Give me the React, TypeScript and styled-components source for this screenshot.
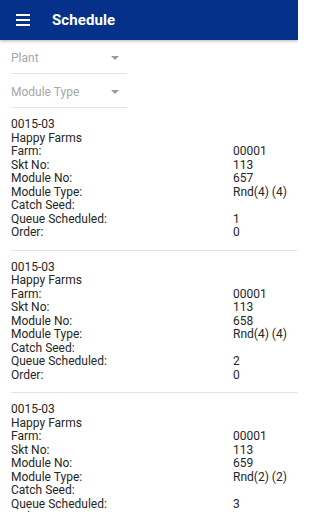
import React from "react";
import styled, { createGlobalStyle } from "styled-components";

//STYLES
const GlobalStyle = createGlobalStyle`
  html, body {
    margin: 0;
    padding: 0;
    background: #ffffff;
    font-family: Roboto, "Liberation Sans", sans-serif;
  }
`;

const Page = styled.div`
  width: 298px;
  height: 512px;
  overflow: hidden;
  background: #ffffff;
`;

const Toolbar = styled.header`
  height: 40px;
  background: #05318a;
  display: flex;
  align-items: center;
  padding-left: 16px;
  box-shadow: 0 1px 3px rgba(0, 0, 0, 0.3);
  position: relative;
  z-index: 1;
`;

const MenuButton = styled.div`
  width: 14px;
  display: flex;
  flex-direction: column;
  gap: 3px;
  margin-right: 22px;

  span {
    display: block;
    height: 2px;
    background: #ffffff;
  }
`;

const Title = styled.h1`
  margin: 0;
  color: #ffffff;
  font-size: 15px;
  font-weight: bold;
  letter-spacing: 0.1px;
`;

const Filters = styled.div`
  padding: 0 0 0 11px;
`;

const Select = styled.div`
  width: 116px;
  height: 34px;
  display: flex;
  align-items: center;
  justify-content: space-between;
  border-bottom: 1px solid #e4e4e4;
  color: #a6a6a6;
  font-size: 12px;
  box-sizing: border-box;
  padding-top: 2px;
`;

const Caret = styled.span`
  width: 0;
  height: 0;
  border-left: 4px solid transparent;
  border-right: 4px solid transparent;
  border-top: 4px solid #9a9a9a;
  margin-right: 8px;
`;

const Card = styled.div`
  margin-left: 11px;
  padding: 10px 0;
  border-bottom: 1px solid #e4e4e4;
  font-size: 12px;
  line-height: 13.5px;
  color: #262626;
`;

const Line = styled.div`
  display: grid;
  grid-template-columns: 222px 1fr;
  white-space: nowrap;
`;

interface Schedule {
  code: string;
  farmName: string;
  farm: string;
  skt: string;
  module: string;
  moduleType: string;
  catchSeed: string;
  queue: string;
  order: string;
}

const schedules: Schedule[] = [
  { code: "0015-03", farmName: "Happy Farms", farm: "00001", skt: "113", module: "657", moduleType: "Rnd(4) (4)", catchSeed: "", queue: "1", order: "0" },
  { code: "0015-03", farmName: "Happy Farms", farm: "00001", skt: "113", module: "658", moduleType: "Rnd(4) (4)", catchSeed: "", queue: "2", order: "0" },
  { code: "0015-03", farmName: "Happy Farms", farm: "00001", skt: "113", module: "659", moduleType: "Rnd(2) (2)", catchSeed: "", queue: "3", order: "0" },
];

export default function App() {
  return (
    <Page>
      <GlobalStyle />
      <Toolbar>
        <MenuButton>
          <span />
          <span />
          <span />
        </MenuButton>
        <Title>Schedule</Title>
      </Toolbar>
      <Filters>
        <Select>
          Plant
          <Caret />
        </Select>
        <Select>
          Module Type
          <Caret />
        </Select>
      </Filters>
      {schedules.map((s, i) => (
        <Card key={i}>
          <div>{s.code}</div>
          <div>{s.farmName}</div>
          <Line><span>Farm:</span><span>{s.farm}</span></Line>
          <Line><span>Skt No:</span><span>{s.skt}</span></Line>
          <Line><span>Module No:</span><span>{s.module}</span></Line>
          <Line><span>Module Type:</span><span>{s.moduleType}</span></Line>
          <Line><span>Catch Seed:</span><span>{s.catchSeed}</span></Line>
          <Line><span>Queue Scheduled:</span><span>{s.queue}</span></Line>
          <Line><span>Order:</span><span>{s.order}</span></Line>
        </Card>
      ))}
    </Page>
  );
}
